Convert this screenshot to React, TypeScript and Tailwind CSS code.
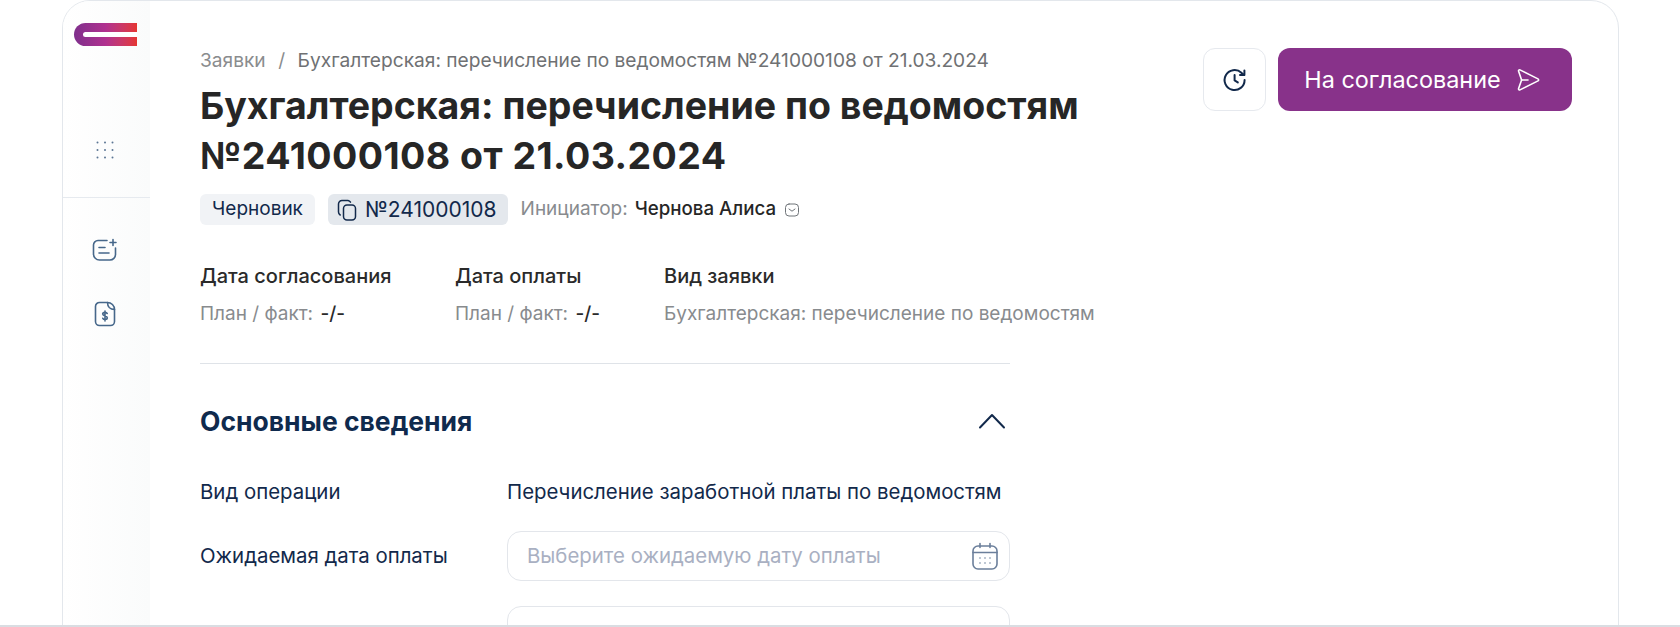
import React from 'react';

const HistoryIcon = () => (
  <svg width="26" height="26" viewBox="0 0 26 26" fill="none" stroke="#12294b" strokeWidth="2" strokeLinecap="round" strokeLinejoin="round">
    <path d="M22.6 13a10 10 0 1 1-3.2-7.3L22 8" />
    <path d="M22.4 3.6V8h-4.4" />
    <path d="M12.6 8v5.4l3.2 2" />
  </svg>
);

const SendIcon = () => (
  <svg width="26" height="26" viewBox="0 0 26 26" fill="none" stroke="white" strokeWidth="1.6" strokeLinejoin="round" strokeLinecap="round">
    <path d="M3.6 4.2c-.3-.9.6-1.700 1.400-1.300l18 9c.8.4.8 1.600 0 2l-18 9c-.8.4-1.700-.4-1.400-1.300L6.600 13 3.600 4.200Z" />
    <path d="M6.600 13H13" />
  </svg>
);

const CopyIcon = () => (
  <svg width="20" height="22" viewBox="0 0 20 22" fill="none" stroke="#12294b" strokeWidth="1.500" strokeLinecap="round" strokeLinejoin="round">
    <rect x="6.500" y="6" width="12" height="15" rx="3.500" />
    <path d="M13.500 3.200A3.500 3.500 0 0 0 11 1.500H5A3.500 3.500 0 0 0 1.500 5v8c0 1.300.7 2.400 1.700 3" />
  </svg>
);

const Logo = () => (
  <div className="h-[23px] w-[63px] rounded-l-full bg-gradient-to-r from-[#7f2f8c] via-[#b0308f] to-[#e5352f] flex items-center justify-end">
    <div className="h-[5px] w-[54px] rounded-l-full bg-white" />
  </div>
);

const GridDots = () => (
  <svg width="18" height="18" viewBox="0 0 18 18" fill="#5c7694">
    {[1.5, 9, 16.5].flatMap((y) =>
      [1.5, 9, 16.5].map((x) => <circle key={`${x}-${y}`} cx={x} cy={y} r="1" />)
    )}
  </svg>
);

const NoteIcon = () => (
  <svg width="26" height="24" viewBox="0 0 26 24" fill="none" stroke="#46678a" strokeWidth="1.6" strokeLinecap="round" strokeLinejoin="round">
    <path d="M15 2.500H6a4.500 4.500 0 0 0-4.500 4.500v9A6 6 0 0 0 7.500 22H18a5.500 5.500 0 0 0 5.500-5.500V10" />
    <path d="M7 9.500h6M7 15h10" />
    <path d="M21 1.500v6M18 4.500h6" />
  </svg>
);

const DollarFileIcon = () => (
  <svg width="22" height="26" viewBox="0 0 22 26" fill="none" stroke="#46678a" strokeWidth="1.6" strokeLinecap="round" strokeLinejoin="round">
    <path d="M13.500 1.500H5.500a4 4 0 0 0-4 4v15a4 4 0 0 0 4 4h11a4 4 0 0 0 4-4V8.500" />
    <path d="M13.500 1.500c0 4 2.500 7 7 7a7 7 0 0 0-7-7Z" />
    <path d="M13.200 12.500c-.4-.7-1.200-1.100-2.200-1.100-1.300 0-2.300.7-2.300 1.700 0 2.400 4.600 1.200 4.600 3.600 0 1-1 1.700-2.300 1.700-1 0-1.800-.4-2.200-1.100M11 10v10" />
  </svg>
);

const CalendarIcon = () => (
  <svg width="26" height="28" viewBox="0 0 26 28" fill="none" stroke="#6b7f9b" strokeWidth="1.600" strokeLinecap="round">
    <rect x="1" y="4" width="24" height="23" rx="5" />
    <path d="M1 10.500h24M8 1.500v4M18 1.500v4" />
    <path d="M8 16h.01M13 16h.01M18 16h.01M8 21h.01M13 21h.01M18 21h.01" />
  </svg>
);

const MailChip = () => (
  <svg width="16" height="16" viewBox="0 0 16 16" fill="none" stroke="#6f7479" strokeWidth="1" strokeLinecap="round" strokeLinejoin="round">
    <rect x="1.500" y="2" width="13" height="12" rx="3.500" />
    <path d="M5 7l3 2.200L11 7" />
  </svg>
);

const ChevronIcon = () => (
  <svg width="28" height="16" viewBox="0 0 28 16" fill="none" stroke="#12294b" strokeWidth="2" strokeLinecap="round" strokeLinejoin="round">
    <path d="M2 14.500 14 2l12 12.500" />
  </svg>
);

const DateColumn = ({ title, className }: { title: string; className: string }) => (
  <div className={className}>
    <p className="text-[20px] leading-[24px] font-medium text-[#2a2a2a]">{title}</p>
    <p className="mt-[14px] text-[19px] leading-[24px] text-[#888b8e]">
      План / факт: <span className="ml-0.5 font-medium text-[#2a2a2a]">-/-</span>
    </p>
  </div>
);

export default function App() {
  return (
    <div className="h-[627px] overflow-hidden bg-white border-b-2 border-[#d9dde2] font-['Inter',sans-serif]">
      <div className="ml-[62px] w-[1557px] h-[640px] flex rounded-t-[28px] border border-[#e3e7ec] overflow-hidden">
        {/* sidebar */}
        <aside className="w-[87px] shrink-0 bg-gradient-to-r from-white to-[#fafbfb]">
          <div className="h-[197px] border-b border-[#e6eaef] pt-[22px] pl-[11px]">
            <Logo />
            <div className="mt-[95px] ml-[22px]">
              <GridDots />
            </div>
          </div>
          <div className="flex flex-col items-center gap-[39px] pt-[40px] pr-[3px]">
            <NoteIcon />
            <DollarFileIcon />
          </div>
        </aside>

        {/* main */}
        <main className="flex-1 pl-[50px] pr-[46px] pt-[47px] flex justify-between items-start">
          <div className="w-[950px]">
            <p className="text-[19.150px] leading-[24px] text-[#6f7173] whitespace-nowrap">
              <span className="text-[#8a8c8e]">Заявки</span>
              <span className="mx-[12.500px] text-[#8a8c8e]">/</span>
              <span>Бухгалтерская: перечисление по ведомостям №241000108 от 21.03.2024</span>
            </p>
            <h1 className="mt-[9px] text-[37.500px] leading-[50px] font-bold text-[#262626] whitespace-nowrap">
              Бухгалтерская: перечисление по ведомостям
              <br />
              <span className="tracking-[0.45px]">№241000108 от 21.03.2024</span>
            </h1>

            <div className="mt-[13px] flex items-center whitespace-nowrap">
              <span className="h-[31px] px-[12px] flex items-center rounded-[6px] bg-[#f1f3f6] text-[19px] text-[#12294b]">Черновик</span>
              <span className="ml-[13px] h-[31px] pl-[9px] pr-[11px] flex items-center gap-[8px] rounded-[6px] bg-[#e4e8ed] text-[21px] text-[#12294b]">
                <CopyIcon />
                №241000108
              </span>
              <span className="ml-[13px] text-[19px] text-[#888b8e]">Инициатор:</span>
              <span className="ml-[7px] text-[18.700px] font-medium text-[#262626]">Чернова Алиса</span>
              <span className="ml-[8px]"><MailChip /></span>
            </div>

            <div className="mt-[39px] flex whitespace-nowrap">
              <DateColumn title="Дата согласования" className="w-[255px]" />
              <DateColumn title="Дата оплаты" className="w-[209px]" />
              <div>
                <p className="text-[20px] leading-[24px] font-medium text-[#2a2a2a]">Вид заявки</p>
                <p className="mt-[14px] text-[19px] leading-[24px] text-[#888b8e]">Бухгалтерская: перечисление по ведомостям</p>
              </div>
            </div>

            <section className="w-[810px] mt-[37px] border-t border-[#dfe3e8]">
              <div className="mt-[38px] flex items-center justify-between">
                <h2 className="text-[26.500px] leading-[38px] font-bold text-[#0f2a4d]">Основные сведения</h2>
                <span className="mr-[4px]"><ChevronIcon /></span>
              </div>
              <div className="mt-[36px] flex items-center h-[32px] text-[20.400px] text-[#12294b]">
                <span className="w-[307px] shrink-0">Вид операции</span>
                <span className="whitespace-nowrap">Перечисление заработной платы по ведомостям</span>
              </div>
              <div className="mt-[23px] flex items-center text-[20.400px] text-[#12294b]">
                <span className="w-[307px] shrink-0">Ожидаемая дата оплаты</span>
                <div className="flex-1 h-[50px] flex items-center justify-between pl-[19px] pr-[11px] rounded-[14px] border border-[#e3e6eb]">
                  <span className="text-[#a9b0c2]">Выберите ожидаемую дату оплаты</span>
                  <CalendarIcon />
                </div>
              </div>
              <div className="mt-[25px] ml-[307px] h-[50px] rounded-[14px] border border-[#e3e6eb]" />
            </section>
          </div>

          <div className="flex items-center gap-[12px]">
            <button className="w-[63px] h-[63px] flex items-center justify-center rounded-[12px] border border-[#e6e9ee] bg-white">
              <HistoryIcon />
            </button>
            <button className="w-[294px] h-[63px] pr-[5px] flex items-center justify-center gap-[14px] rounded-[12px] bg-[#88328a] text-[23.400px] text-white whitespace-nowrap">
              На согласование
              <SendIcon />
            </button>
          </div>
        </main>
      </div>
    </div>
  );
}
